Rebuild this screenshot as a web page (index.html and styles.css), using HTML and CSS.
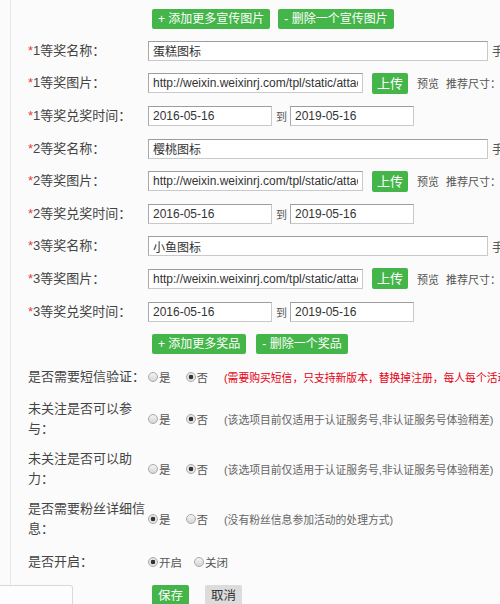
FILE: index.html
```html
<!DOCTYPE html>
<html lang="zh-CN">
  <head>
    <meta charset="UTF-8" />
    <meta name="viewport" content="width=device-width, initial-scale=1.0" />
    <title>奖品设置</title>
    <link rel="stylesheet" href="styles.css">
  </head>
  <body>
    <div class="page">
      <!-- 宣传图片按钮 -->
      <div class="btn-row">
        <a class="btn">+ 添加更多宣传图片</a>
        <a class="btn">- 删除一个宣传图片</a>
      </div>

      <!-- 1等奖 -->
      <div class="row">
        <label class="row-label"><em>*</em>1等奖名称：</label>
        <input class="text-input wide" type="text" value="蛋糕图标" />
        <span class="tip-side">手</span>
      </div>
      <div class="row">
        <label class="row-label"><em>*</em>1等奖图片：</label>
        <input class="text-input url" type="text" value="http://weixin.weixinrj.com/tpl/static/attachment/cake.png" />
        <a class="btn btn-upload">上传</a>
        <span class="tip">预览</span>
        <span class="tip tip-size">推荐尺寸：200*200</span>
      </div>
      <div class="row">
        <label class="row-label"><em>*</em>1等奖兑奖时间：</label>
        <input class="text-input date" type="text" value="2016-05-16" />
        <span class="to">到</span>
        <input class="text-input date" type="text" value="2019-05-16" />
      </div>

      <!-- 2等奖 -->
      <div class="row">
        <label class="row-label"><em>*</em>2等奖名称：</label>
        <input class="text-input wide" type="text" value="樱桃图标" />
        <span class="tip-side">手</span>
      </div>
      <div class="row">
        <label class="row-label"><em>*</em>2等奖图片：</label>
        <input class="text-input url" type="text" value="http://weixin.weixinrj.com/tpl/static/attachment/cherry.png" />
        <a class="btn btn-upload">上传</a>
        <span class="tip">预览</span>
        <span class="tip tip-size">推荐尺寸：200*200</span>
      </div>
      <div class="row">
        <label class="row-label"><em>*</em>2等奖兑奖时间：</label>
        <input class="text-input date" type="text" value="2016-05-16" />
        <span class="to">到</span>
        <input class="text-input date" type="text" value="2019-05-16" />
      </div>

      <!-- 3等奖 -->
      <div class="row">
        <label class="row-label"><em>*</em>3等奖名称：</label>
        <input class="text-input wide" type="text" value="小鱼图标" />
        <span class="tip-side">手</span>
      </div>
      <div class="row">
        <label class="row-label"><em>*</em>3等奖图片：</label>
        <input class="text-input url" type="text" value="http://weixin.weixinrj.com/tpl/static/attachment/fish.png" />
        <a class="btn btn-upload">上传</a>
        <span class="tip">预览</span>
        <span class="tip tip-size">推荐尺寸：200*200</span>
      </div>
      <div class="row">
        <label class="row-label"><em>*</em>3等奖兑奖时间：</label>
        <input class="text-input date" type="text" value="2016-05-16" />
        <span class="to">到</span>
        <input class="text-input date" type="text" value="2019-05-16" />
      </div>

      <!-- 奖品按钮 -->
      <div class="btn-row btn-row-prize">
        <a class="btn">+ 添加更多奖品</a>
        <a class="btn">- 删除一个奖品</a>
      </div>

      <!-- 活动选项 -->
      <div class="row row-sms">
        <label class="row-label">是否需要短信验证：</label>
        <span class="radio"><i></i>是</span>
        <span class="radio"><i class="on"></i>否</span>
        <span class="note note-red">(需要购买短信，只支持新版本，替换掉注册，每人每个活动只能验证一次)</span>
      </div>
      <div class="row row-tall">
        <label class="row-label">未关注是否可以参与：</label>
        <span class="radio"><i></i>是</span>
        <span class="radio"><i class="on"></i>否</span>
        <span class="note">(该选项目前仅适用于认证服务号,非认证服务号体验稍差)</span>
      </div>
      <div class="row row-tall">
        <label class="row-label">未关注是否可以助力：</label>
        <span class="radio"><i></i>是</span>
        <span class="radio"><i class="on"></i>否</span>
        <span class="note">(该选项目前仅适用于认证服务号,非认证服务号体验稍差)</span>
      </div>
      <div class="row row-tall">
        <label class="row-label">是否需要粉丝详细信息：</label>
        <span class="radio"><i class="on"></i>是</span>
        <span class="radio"><i></i>否</span>
        <span class="note">(没有粉丝信息参加活动的处理方式)</span>
      </div>
      <div class="row row-open">
        <label class="row-label">是否开启：</label>
        <span class="radio radio-open"><i class="on"></i>开启</span>
        <span class="radio"><i></i>关闭</span>
      </div>

      <!-- 保存 / 取消 -->
      <div class="btn-row btn-row-save">
        <a class="btn btn-big">保存</a>
        <a class="btn btn-big btn-gray">取消</a>
      </div>
    </div>

    <!-- 左下角浮动条 -->
    <div class="float-tab"></div>
  </body>
</html>
```

FILE: styles.css
```css
/* 页面基础 */
html,
body {
  height: 100%;
}

body {
  margin: 0;
  overflow: hidden;
  background-color: #fbfbfb;
  font-family: "Liberation Sans", "Noto Sans CJK SC", sans-serif;
  color: #444;
}

.page {
  margin-left: 10px;
  border-left: 1px solid #e6e6e6;
  padding: 3px 0 0 17px;
  min-height: 100%;
  box-sizing: border-box;
}

/* 按钮 */
.btn-row {
  display: flex;
  align-items: center;
  height: 31.5px;
  padding-left: 124px;
  white-space: nowrap;
}

.btn {
  display: inline-block;
  height: 20px;
  line-height: 20px;
  padding: 0 6px;
  margin-right: 8px;
  background-color: #44b549;
  color: #fff;
  font-size: 12px;
  border-radius: 2px;
  cursor: pointer;
  flex-shrink: 0;
}

.btn-row-prize {
  height: 32px;
}

.btn-row-prize .btn {
  margin-right: 10px;
}

.btn-row-save {
  height: 22px;
  margin-top: 5px;
  align-items: flex-start;
}

.btn-big {
  height: 22px;
  line-height: 22px;
  font-size: 12.5px;
  margin-right: 16px;
}

.btn-gray {
  background-color: #dcdcdc;
  color: #333;
}

/* 表单行 */
.row {
  display: flex;
  align-items: center;
  height: 32.6px;
  white-space: nowrap;
}

.row-label {
  width: 120px;
  flex-shrink: 0;
  font-size: 13px;
  line-height: 20px;
  white-space: normal;
  color: #444;
}

.row-label em {
  font-style: normal;
  color: #e63a3a;
}

.text-input {
  box-sizing: border-box;
  height: 20px;
  padding: 0 4px;
  border: 1px solid #c9c9c9;
  border-top-color: #9d9d9d;
  border-left-color: #a9a9a9;
  background-color: #fff;
  font-family: "Liberation Sans", "Noto Sans CJK SC", sans-serif;
  font-size: 12px;
  color: #333;
  outline: none;
  flex-shrink: 0;
}

.text-input.wide {
  width: 340px;
}

.text-input.url {
  width: 215px;
}

.text-input.date {
  width: 124px;
}

.tip-side {
  margin-left: 4px;
  font-size: 12px;
  color: #555;
}

.btn-upload {
  height: 21px;
  line-height: 21px;
  width: 36px;
  padding: 0;
  text-align: center;
  font-size: 13px;
  margin: 0 0 0 9px;
}

.tip {
  margin-left: 9px;
  font-size: 11px;
  color: #555;
  flex-shrink: 0;
}

.tip-size {
  margin-left: 7px;
}

.to {
  margin: 0 3px 0 4px;
  font-size: 11px;
  color: #555;
}

/* 单选项 */
.row-sms {
  height: 34px;
}

.row-tall {
  height: 50px;
}

.row-open {
  height: 36px;
}

.radio {
  display: inline-flex;
  align-items: center;
  margin-right: 15px;
  font-size: 11.5px;
  color: #555;
  flex-shrink: 0;
}

.radio-open {
  margin-right: 12px;
}

.radio i {
  display: inline-block;
  width: 10px;
  height: 10px;
  margin-right: 1px;
  box-sizing: border-box;
  border: 1px solid #a8a8a8;
  border-radius: 50%;
  background: linear-gradient(#f4f4f4, #d6d6d6);
}

.radio i.on {
  background: radial-gradient(circle, #333 0, #333 2px, #e6e6e6 2.6px);
}

.note {
  margin-left: 1px;
  font-size: 10.8px;
  color: #666;
  flex-shrink: 0;
}

.note-red {
  color: #e60012;
}

/* 左下角浮动条 */
.float-tab {
  position: fixed;
  left: 0;
  bottom: 0;
  width: 72px;
  height: 18px;
  background-color: #fdfdfd;
  border: 1px solid #d9d9d9;
  border-left: none;
  border-bottom: none;
  border-top-right-radius: 3px;
}
```
